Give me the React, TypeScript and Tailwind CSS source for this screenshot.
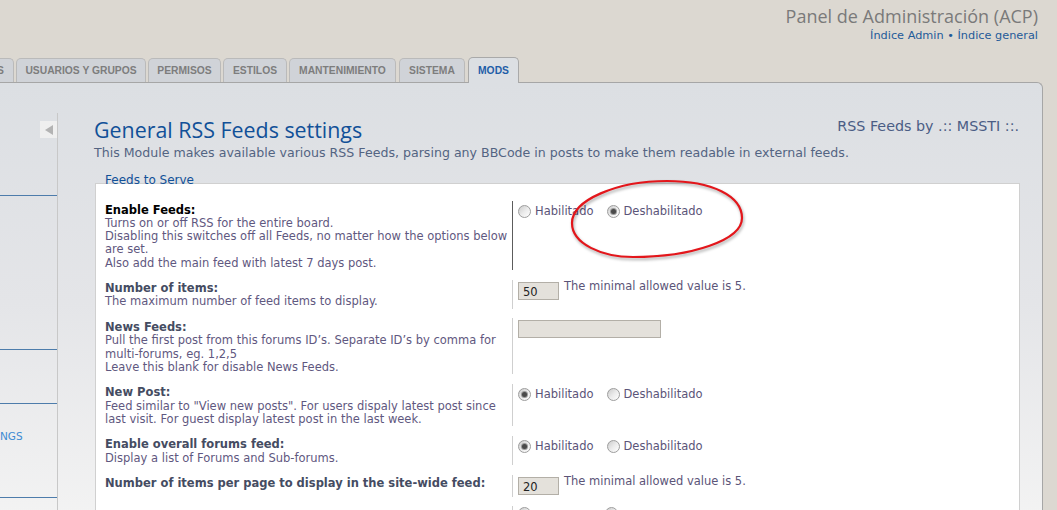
import React from "react";

const Radio = ({ checked }: { checked?: boolean }) => (
  <span className="relative block h-[13px] w-[13px] shrink-0 rounded-full border border-[#9d9d9d] bg-gradient-to-br from-[#cbcbcb] via-[#ebebeb] to-[#ffffff]">
    {checked && (
      <span className="absolute left-[3px] top-[3px] h-[5px] w-[5px] rounded-full bg-[#4a4a4a] shadow-[0_0_0_1px_#9a9a9a]" />
    )}
  </span>
);

const RadioPair = ({ on }: { on: boolean }) => (
  <div className="flex items-center pt-[2px]">
    <Radio checked={on} />
    <span className="ml-[4px] text-[#5b5478]">Habilitado</span>
    <span className="ml-[14px]">
      <Radio checked={!on} />
    </span>
    <span className="ml-[3px] text-[#5b5478]">Deshabilitado</span>
  </div>
);

const Input = ({ value, w }: { value: string; w: string }) => (
  <div
    className={`h-[18px] ${w} shrink-0 border border-[#b3afa7] bg-[#e4e1db] pl-[4px] pt-[1px] text-[11.5px] leading-[16px] text-[#222]`}
  >
    {value}
  </div>
);

const Row = ({
  title,
  lines,
  hover,
  children,
}: {
  title: string;
  lines: string[];
  hover?: boolean;
  children: React.ReactNode;
}) => (
  <div className="mb-[9.7px] flex">
    <div className="w-[407px] shrink-0 pt-[2.5px]">
      <div className={`font-bold ${hover ? "text-black" : "text-[#454c62]"}`}>{title}</div>
      {lines.map((l) => (
        <div key={l} className="whitespace-nowrap text-[#5f5880]">
          {l}
        </div>
      ))}
    </div>
    <div
      className={`flex-1 border-l pl-[5px] pt-[2px] ${hover ? "border-[#5c5c5c]" : "border-[#cfcfcf]"}`}
    >
      {children}
    </div>
  </div>
);

const tabBase =
  "flex h-[24px] shrink-0 items-center rounded-t-[5px] border border-b-0 border-[#bababa] bg-[#d0d3d8] text-[10.3px] font-bold text-[#7d7d7d]";

export default function App() {
  return (
    <div className="relative flex h-[510px] w-[1057px] flex-col overflow-hidden bg-[#dcd8d1] font-['DejaVu_Sans',Verdana,sans-serif]">
      {/* header */}
      <header className="flex h-[57px] shrink-0 flex-col items-end pr-[19px] pt-[4px]">
        <div className="font-['Open_Sans',sans-serif] text-[18px] leading-[24px] text-[#7a7a7a]">
          Panel de Administración (ACP)
        </div>
        <div className="mt-[1px] text-[11.3px] leading-[14px] text-[#1f5b99]">Índice Admin • Índice general</div>
      </header>

      {/* tabs */}
      <nav className="flex h-[25px] shrink-0 items-end font-['Liberation_Sans',Arial,sans-serif]">
        <div className={`${tabBase} -ml-[46px] w-[60px] justify-end pr-[9px]`}>MENSAJES</div>
        <div className={`${tabBase} ml-[2px] w-[130px] justify-center`}>USUARIOS Y GRUPOS</div>
        <div className={`${tabBase} ml-[2px] w-[73px] justify-center`}>PERMISOS</div>
        <div className={`${tabBase} ml-[2px] w-[64px] justify-center`}>ESTILOS</div>
        <div className={`${tabBase} ml-[2px] w-[107px] justify-center`}>MANTENIMIENTO</div>
        <div className={`${tabBase} ml-[3px] w-[66px] justify-center`}>SISTEMA</div>
        <div className="relative top-[1px] z-10 ml-[3px] flex h-[26px] w-[51px] shrink-0 items-center justify-center rounded-t-[5px] border border-b-0 border-[#a9a9a9] bg-[#dcdfe3] pt-[1px] text-[10.3px] font-bold text-[#1f5ea8]">
          MODS
        </div>
      </nav>

      {/* panel */}
      <div className="mr-[14px] flex flex-1 rounded-tr-[6px] border-r border-t border-[#a6a6a6] bg-gradient-to-b from-[#dcdfe3] via-[#e4e5e8] to-[#f3f3f3]">
        {/* sidebar */}
        <aside className="mt-[30px] flex w-[58px] shrink-0 flex-col border-r border-[#c8c8c8]">
          <div className="ml-auto mt-[8px] flex h-[17px] w-[17px] items-center justify-center bg-[#efefef]">
            <span className="block h-0 w-0 border-y-[5px] border-r-[8px] border-y-transparent border-r-[#b3b3b3]" />
          </div>
          <div className="h-[58px] border-b border-[#4d7cab]" />
          <div className="h-[154px] border-b border-[#4d7cab]" />
          <div className="h-[54px] border-b border-[#4d7cab]" />
          <div className="h-[94px] border-b border-[#4d7cab] pt-[25px] text-[10.5px] leading-[14px] text-[#3d8bd3]">
            NGS
          </div>
        </aside>

        {/* content */}
        <main className="flex-1 pl-[36px] pr-[22px] pt-[34px]">
          <div className="flex items-start justify-between">
            <h1 className="font-['Open_Sans',sans-serif] text-[21.4px] leading-[26px] text-[#115098]">
              General RSS Feeds settings
            </h1>
            <div className="mr-[1px] mt-[1px] text-[14.3px] leading-[17px] text-[#4b5d85]">
              RSS Feeds by .:: MSSTI ::.
            </div>
          </div>
          <p className="mt-[2px] whitespace-nowrap text-[12.6px] leading-[16px] text-[#536482]">
            This Module makes available various RSS Feeds, parsing any BBCode in posts to make them readable in
            external feeds.
          </p>

          <div className="relative z-10 mt-[12px] pl-[11px] text-[12px] leading-[14px] text-[#115098]">
            Feeds to Serve
          </div>
          <div className="-mt-[4px] ml-[1px] border border-b-0 border-[#d0d0d0] bg-white pl-[9px] pt-[17px] text-[11.5px] leading-[13.3px]">
            <Row
              hover
              title="Enable Feeds:"
              lines={[
                "Turns on or off RSS for the entire board.",
                "Disabling this switches off all Feeds, no matter how the options below",
                "are set.",
                "Also add the main feed with latest 7 days post.",
              ]}
            >
              <RadioPair on={false} />
            </Row>
            <Row title="Number of items:" lines={["The maximum number of feed items to display."]}>
              <div className="flex items-start">
                <Input value="50" w="w-[41px]" />
                <span className="ml-[5px] -mt-[2px] text-[#5b5478]">The minimal allowed value is 5.</span>
              </div>
            </Row>
            <Row
              title="News Feeds:"
              lines={[
                "Pull the first post from this forums ID’s. Separate ID’s by comma for",
                "multi-forums, eg. 1,2,5",
                "Leave this blank for disable News Feeds.",
              ]}
            >
              <Input value="" w="w-[143px]" />
            </Row>
            <Row
              title="New Post:"
              lines={[
                'Feed similar to "View new posts". For users dispaly latest post since',
                "last visit. For guest display latest post in the last week.",
              ]}
            >
              <RadioPair on />
            </Row>
            <Row title="Enable overall forums feed:" lines={["Display a list of Forums and Sub-forums."]}>
              <RadioPair on />
            </Row>
            <Row title="Number of items per page to display in the site-wide feed:" lines={[]}>
              <div className="flex items-start pb-[2px]">
                <Input value="20" w="w-[41px]" />
                <span className="ml-[5px] -mt-[2px] text-[#5b5478]">The minimal allowed value is 5.</span>
              </div>
            </Row>
            <div className="flex">
              <div className="w-[407px] shrink-0" />
              <div className="flex-1 border-l border-[#cfcfcf] pl-[5px] pt-[1px]">
                <div className="flex h-[14px] items-start">
                  <Radio checked />
                  <span className="ml-[74px]">
                    <Radio />
                  </span>
                </div>
              </div>
            </div>
          </div>
        </main>
      </div>

      {/* red annotation ellipse */}
      <svg
        className="absolute left-[562px] top-[172px] drop-shadow-[1px_2px_1.5px_rgba(0,0,0,0.35)]"
        width="195"
        height="100"
        viewBox="0 0 195 100"
        fill="none"
      >
        <path
          d="M 180 46 C 180 24, 150 9, 105 9 C 55 9, 10 28, 10 51 C 10 72, 40 85, 71 85 C 130 85, 180 68, 180 46 Z"
          stroke="#e3161b"
          strokeWidth="2.2"
        />
      </svg>
    </div>
  );
}
